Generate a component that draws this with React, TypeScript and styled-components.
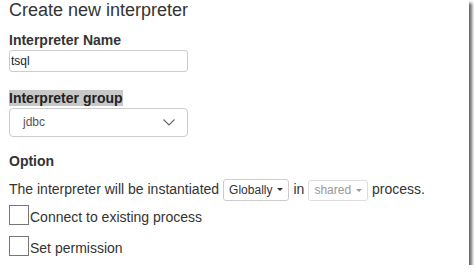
import React from "react";
import styled, { createGlobalStyle } from "styled-components";

const GlobalStyle = createGlobalStyle`
  html, body { margin: 0; padding: 0; background: #fff; }
  body {
    font-family: "Liberation Sans", Arial, sans-serif;
    color: #333;
    -webkit-font-smoothing: antialiased;
  }
`;

const Frame = styled.div`
  width: 469px;
  height: 265px;
  background: #fff;
  box-shadow: 3px 3px 3px rgba(0, 0, 0, 0.6);
  box-sizing: border-box;
  padding: 1px 0 0 9px;
  display: flex;
  flex-direction: column;
`;

const Title = styled.h4`
  margin: 0;
  font-size: 18px;
  font-weight: 400;
  line-height: 19.8px;
  color: #333;
`;

const Group = styled.div<{ $top: number }>`
  display: flex;
  flex-direction: column;
  margin-top: ${(p) => p.$top}px;
`;

const Label = styled.label`
  font-size: 14px;
  font-weight: 700;
  line-height: 20px;
  color: #333;
`;

const Highlight = styled.span`
  background: #c8c8c8;
  color: #222;
`;

const TextInput = styled.input`
  box-sizing: border-box;
  width: 179px;
  height: 22px;
  margin: 0;
  padding: 0 1px;
  border: 1px solid #ccc;
  border-radius: 3px;
  font-family: "Liberation Sans", Arial, sans-serif;
  font-size: 12px;
  color: #222;
  outline: none;
`;

const SelectBox = styled.div`
  box-sizing: border-box;
  width: 179px;
  height: 29px;
  border: 1px solid #ccc;
  border-radius: 4px;
  display: flex;
  align-items: center;
  justify-content: space-between;
  padding: 0 12px 0 13px;
  font-size: 12px;
  color: #555;
`;

const Chevron = () => (
  <svg width="12" height="7" viewBox="0 0 12 7">
    <polyline points="0.5,0.5 6,6 11.5,0.5" fill="none" stroke="#666" strokeWidth="1.1" />
  </svg>
);

const SectionTitle = styled.div`
  font-size: 14px;
  font-weight: 700;
  line-height: 20px;
  margin-top: 14px;
`;

const InlineRow = styled.div`
  display: flex;
  align-items: center;
  gap: 4px;
  height: 22px;
  margin-top: 8px;
  font-size: 14px;
`;

const RowText = styled.span`
  line-height: 18px;
  padding-bottom: 2px;
`;

const DropButton = styled.span<{ $disabled?: boolean }>`
  box-sizing: border-box;
  display: inline-flex;
  align-items: center;
  gap: 5px;
  height: ${(p) => (p.$disabled ? 21 : 22)}px;
  margin-top: ${(p) => (p.$disabled ? 1 : 0)}px;
  padding: 0 5px;
  border: 1px solid ${(p) => (p.$disabled ? "#ddd" : "#ccc")};
  border-radius: 3px;
  font-size: 12px;
  color: ${(p) => (p.$disabled ? "#999" : "#333")};
`;

const Caret = styled.span<{ $disabled?: boolean }>`
  width: 0;
  height: 0;
  border-left: 3px solid transparent;
  border-right: 3px solid transparent;
  border-top: 3px solid ${(p) => (p.$disabled ? "#999" : "#333")};
`;

const CheckRow = styled.label<{ $top: number }>`
  display: flex;
  align-items: center;
  height: 20px;
  margin-top: ${(p) => p.$top}px;
  font-size: 14px;
  color: #333;
`;

const Box = styled.span`
  box-sizing: border-box;
  width: 20px;
  height: 20px;
  border: 1px solid #777;
  background: #fff;
  flex: none;
`;

const CheckText = styled.span`
  line-height: 16px;
  padding-top: 4px;
  margin-left: 1px;
`;

export default function App() {
  return (
    <>
      <GlobalStyle />
      <Frame>
        <Title>Create new interpreter</Title>
        <Group $top={9}>
          <Label>Interpreter Name</Label>
          <TextInput defaultValue="tsql" />
        </Group>
        <Group $top={16}>
          <Label>
            <Highlight>Interpreter group</Highlight>
          </Label>
          <SelectBox>
            <span>jdbc</span>
            <Chevron />
          </SelectBox>
        </Group>
        <SectionTitle>Option</SectionTitle>
        <InlineRow>
          <RowText>The interpreter will be instantiated</RowText>
          <DropButton>
            Globally
            <Caret />
          </DropButton>
          <RowText>in</RowText>
          <DropButton $disabled>
            shared
            <Caret $disabled />
          </DropButton>
          <RowText>process.</RowText>
        </InlineRow>
        <CheckRow $top={4}>
          <Box />
          <CheckText>Connect to existing process</CheckText>
        </CheckRow>
        <CheckRow $top={11}>
          <Box />
          <CheckText>Set permission</CheckText>
        </CheckRow>
      </Frame>
    </>
  );
}
